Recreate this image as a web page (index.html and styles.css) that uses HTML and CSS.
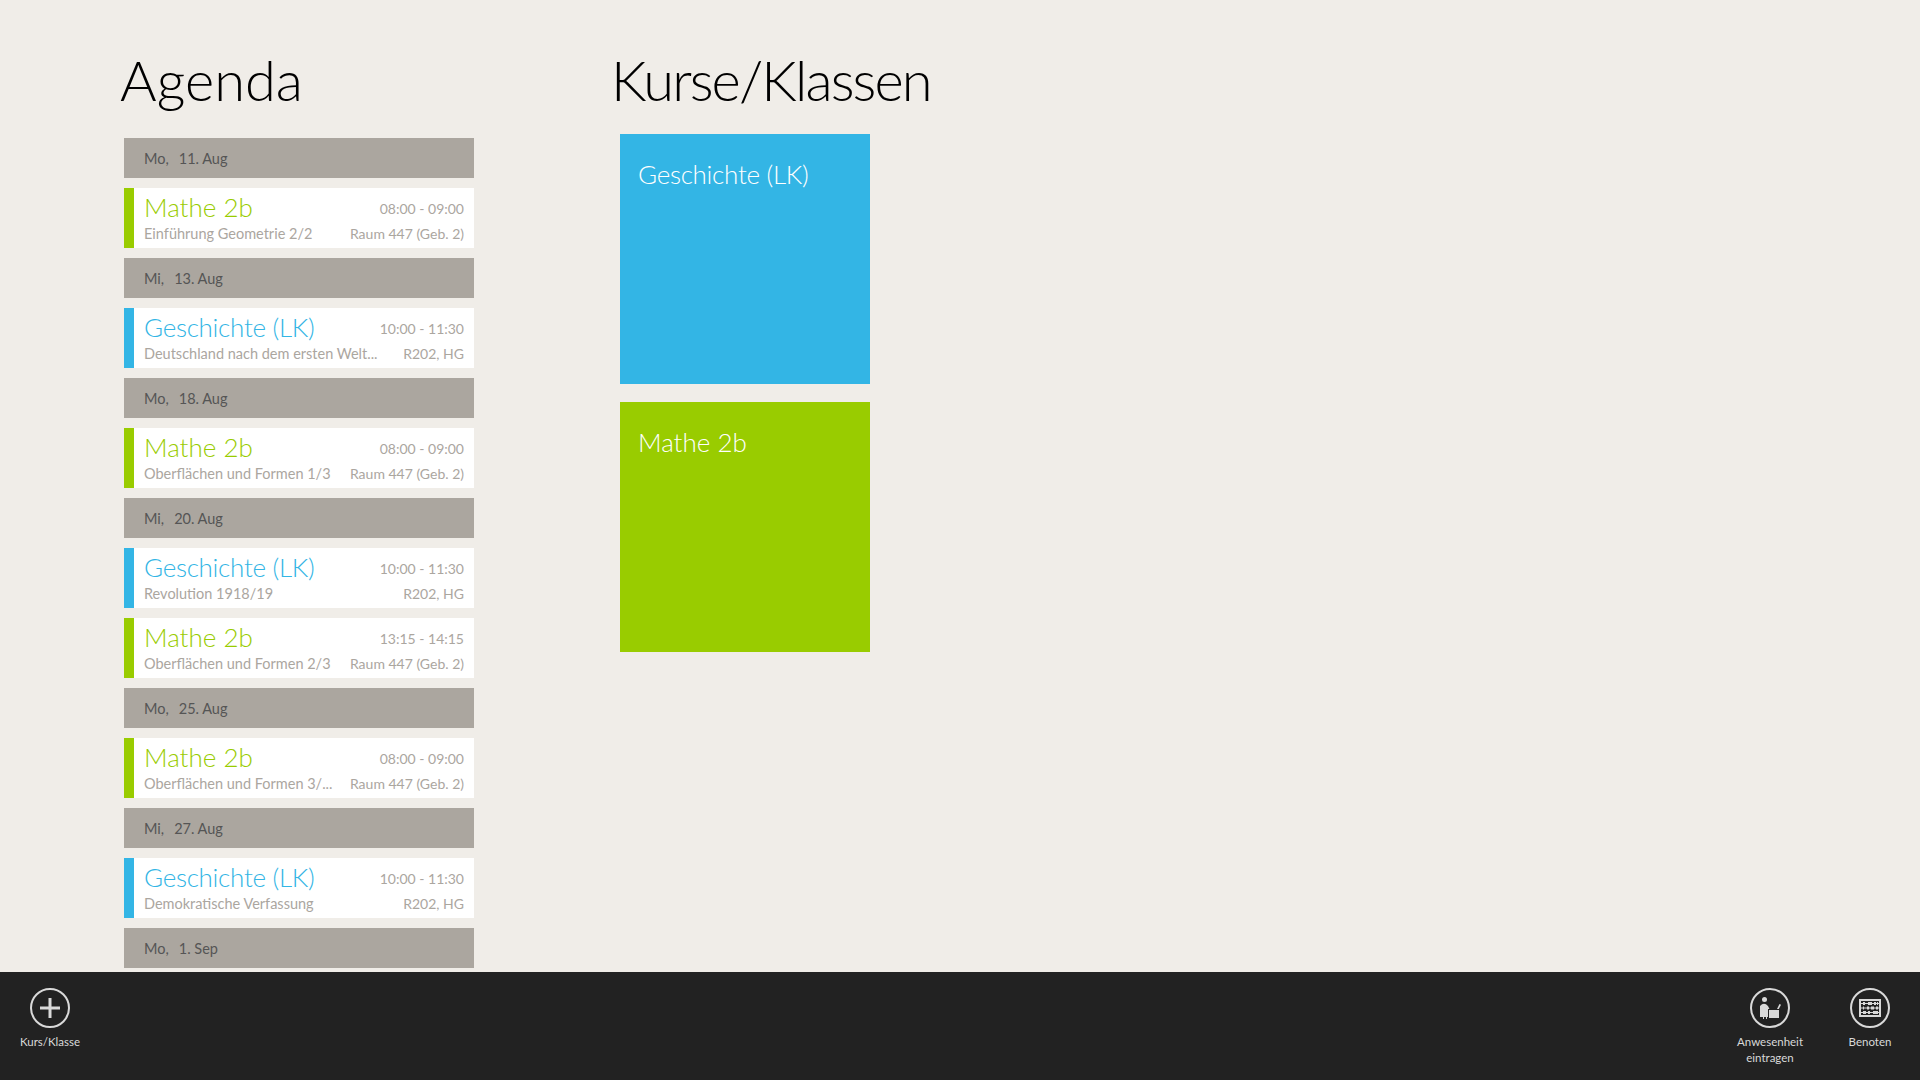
FILE: index.html

```html
<!DOCTYPE html>
<html lang="de">
<head>
    <meta charset="UTF-8">
    <title>Agenda</title>
    <link rel="stylesheet" href="styles.css">
</head>
<body>
    <div class="main">
        <div class="agenda">
            <h1>Agenda</h1>
            <div class="agenda-list">
                <div class="day">Mo,<span class="date">11. Aug</span></div>
                <div class="lesson mathe">
                    <div class="lesson-top"><span class="name">Mathe 2b</span><span class="time">08:00 - 09:00</span></div>
                    <div class="lesson-bottom"><span class="topic">Einführung Geometrie 2/2</span><span class="room">Raum 447 (Geb. 2)</span></div>
                </div>
                <div class="day">Mi,<span class="date">13. Aug</span></div>
                <div class="lesson geschichte">
                    <div class="lesson-top"><span class="name">Geschichte (LK)</span><span class="time">10:00 - 11:30</span></div>
                    <div class="lesson-bottom"><span class="topic">Deutschland nach dem ersten Welt...</span><span class="room">R202, HG</span></div>
                </div>
                <div class="day">Mo,<span class="date">18. Aug</span></div>
                <div class="lesson mathe">
                    <div class="lesson-top"><span class="name">Mathe 2b</span><span class="time">08:00 - 09:00</span></div>
                    <div class="lesson-bottom"><span class="topic">Oberflächen und Formen 1/3</span><span class="room">Raum 447 (Geb. 2)</span></div>
                </div>
                <div class="day">Mi,<span class="date">20. Aug</span></div>
                <div class="lesson geschichte">
                    <div class="lesson-top"><span class="name">Geschichte (LK)</span><span class="time">10:00 - 11:30</span></div>
                    <div class="lesson-bottom"><span class="topic">Revolution 1918/19</span><span class="room">R202, HG</span></div>
                </div>
                <div class="lesson mathe">
                    <div class="lesson-top"><span class="name">Mathe 2b</span><span class="time">13:15 - 14:15</span></div>
                    <div class="lesson-bottom"><span class="topic">Oberflächen und Formen 2/3</span><span class="room">Raum 447 (Geb. 2)</span></div>
                </div>
                <div class="day">Mo,<span class="date">25. Aug</span></div>
                <div class="lesson mathe">
                    <div class="lesson-top"><span class="name">Mathe 2b</span><span class="time">08:00 - 09:00</span></div>
                    <div class="lesson-bottom"><span class="topic">Oberflächen und Formen 3/...</span><span class="room">Raum 447 (Geb. 2)</span></div>
                </div>
                <div class="day">Mi,<span class="date">27. Aug</span></div>
                <div class="lesson geschichte">
                    <div class="lesson-top"><span class="name">Geschichte (LK)</span><span class="time">10:00 - 11:30</span></div>
                    <div class="lesson-bottom"><span class="topic">Demokratische Verfassung</span><span class="room">R202, HG</span></div>
                </div>
                <div class="day">Mo,<span class="date">1. Sep</span></div>
            </div>
        </div>
        <div class="courses">
            <h1>Kurse/Klassen</h1>
            <div class="tiles">
                <div class="tile tile-blue">Geschichte (LK)</div>
                <div class="tile tile-green">Mathe 2b</div>
            </div>
        </div>
    </div>
    <div class="appbar">
        <div class="appbar-btn">
            <svg class="icon" viewBox="0 0 40 40">
                <circle cx="20" cy="20" r="19" fill="none" stroke="#d9d9d9" stroke-width="2"/>
                <path d="M10 20H30M20 10V30" fill="none" stroke="#d9d9d9" stroke-width="3"/>
            </svg>
            <span>Kurs/Klasse</span>
        </div>
        <div class="appbar-right">
            <div class="appbar-btn">
                <svg class="icon" viewBox="0 0 40 40">
                    <circle cx="20" cy="20" r="19" fill="none" stroke="#d9d9d9" stroke-width="2"/>
                    <circle cx="14.500" cy="11.500" r="2.500" fill="#d9d9d9"/>
                    <path d="M10 18q4-4.500 8 0l1.500 3H18v8h-1v2h-1v-2h-2v2h-1v-2h-3z" fill="#d9d9d9"/>
                    <path d="M19 22h10v8H19z" fill="#d9d9d9"/>
                    <path d="M27 21l2.500-5 1.500.7-2.200 4.300z" fill="#d9d9d9"/>
                </svg>
                <span>Anwesenheit<br>eintragen</span>
            </div>
            <div class="appbar-btn">
                <svg class="icon" viewBox="0 0 40 40">
                    <circle cx="20" cy="20" r="19" fill="none" stroke="#d9d9d9" stroke-width="2"/>
                    <rect x="10" y="12" width="20" height="16" fill="none" stroke="#d9d9d9" stroke-width="2"/>
                    <path d="M11 15.500h18M11 20h18M11 24.500h18" stroke="#d9d9d9" stroke-width="1"/>
                    <path d="M13 15.500h2M18 15.500h4M24 15.500h2M27 15.500h1M13 20h1M17 20h2M21 20h3M26 20h2M13 24.500h3M18 24.500h2M23 24.500h5" stroke="#d9d9d9" stroke-width="3"/>
                </svg>
                <span>Benoten</span>
            </div>
        </div>
    </div>
</body>
</html>
```

FILE: styles.css

```css
body {
    margin: 0;
    height: 1080px;
    overflow: hidden;
    display: flex;
    flex-direction: column;
    background-color: #F0EDE8;
    font-family: Lato, sans-serif;
}
h1 {
    margin: 0;
    height: 134px;
    box-sizing: border-box;
    padding-top: 42px;
    font-size: 56px;
    line-height: 76px;
    font-weight: 300;
    color: #000;
}
.courses h1 {
    letter-spacing: -1.9px;
}
.main {
    flex: 1;
    min-height: 0;
    display: flex;
    padding-left: 120px;
}
.agenda {
    width: 491px;
}
.agenda-list {
    width: 350px;
    margin: 4px 0 0 4px;
    display: flex;
    flex-direction: column;
    gap: 10px;
}
.day {
    height: 40px;
    padding-left: 20px;
    background-color: #ABA69F;
    color: #555;
    font-size: 14.5px;
    line-height: 41px;
}
.date {
    margin-left: 10px;
}
.lesson {
    height: 60px;
    box-sizing: border-box;
    padding: 0 10px 0 10px;
    border-left: 10px solid;
    background-color: #fff;
    color: #ABA69F;
    font-size: 14px;
}
.lesson-top, .lesson-bottom {
    display: flex;
    justify-content: space-between;
    align-items: center;
}
.lesson-top {
    height: 37px;
    box-sizing: border-box;
    padding-top: 1px;
}
.time {
    padding-top: 2px;
}
.lesson-bottom {
    gap: 8px;
    line-height: 18px;
}
.name {
    font-size: 26px;
    font-weight: 300;
}
.geschichte .name, .tile-blue {
    letter-spacing: -.3px;
}
.topic {
    flex: 1;
    min-width: 0;
    overflow: hidden;
    white-space: nowrap;
    text-overflow: ellipsis;
    font-size: 14.5px;
}
.room, .time {
    white-space: nowrap;
}
.mathe {
    border-color: #99CC00;
}
.mathe .name {
    color: #99CC00;
}
.geschichte {
    border-color: #33B5E5;
}
.geschichte .name {
    color: #33B5E5;
}
.tiles {
    margin-left: 9px;
    display: flex;
    flex-direction: column;
    gap: 18px;
}
.tile {
    width: 250px;
    height: 250px;
    box-sizing: border-box;
    padding: 22px 18px;
    color: #fff;
    font-size: 26px;
    font-weight: 300;
    line-height: 36px;
}
.tile-blue {
    background-color: #33B5E5;
}
.tile-green {
    background-color: #99CC00;
}
.appbar {
    height: 108px;
    display: flex;
    justify-content: space-between;
    background-color: #222;
}
.appbar-right {
    display: flex;
}
.appbar-btn {
    width: 100px;
    padding-top: 16px;
    display: flex;
    flex-direction: column;
    align-items: center;
    color: #d9d9d9;
    font-size: 11.5px;
    line-height: 16px;
    text-align: center;
}
.icon {
    width: 40px;
    height: 40px;
    margin-bottom: 6px;
}
```
